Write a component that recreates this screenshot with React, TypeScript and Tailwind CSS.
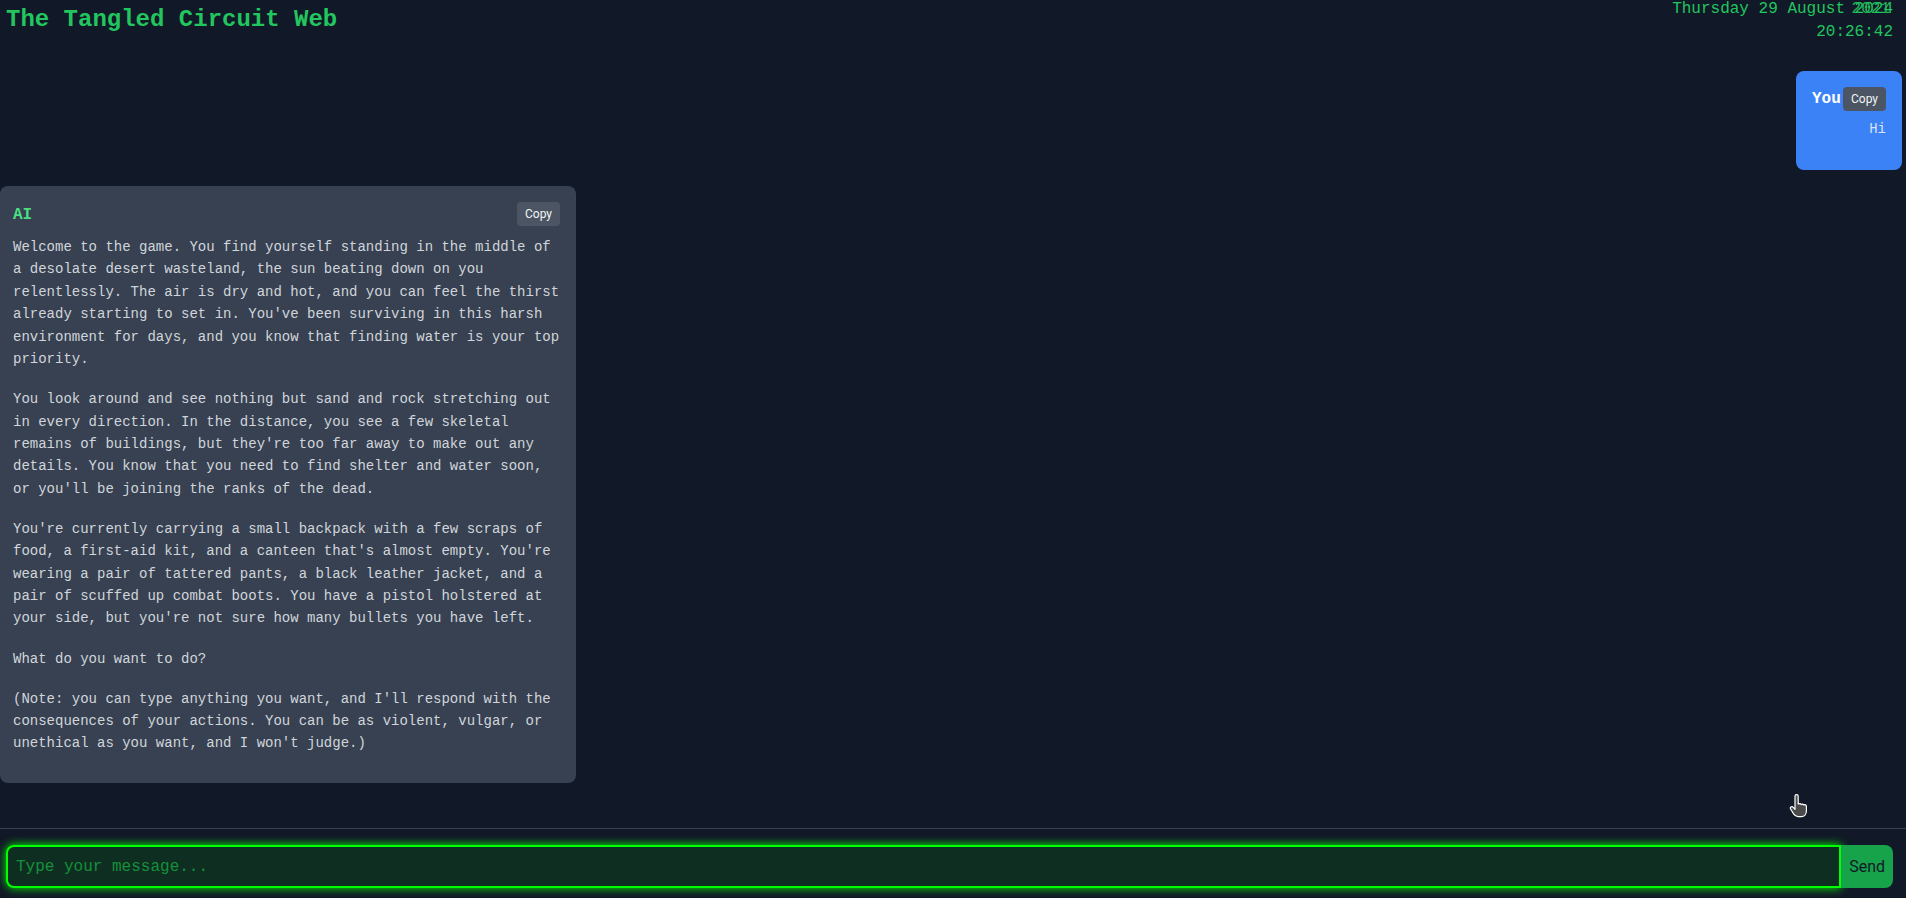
import React from 'react';

const aiParagraphs = [
  "Welcome to the game. You find yourself standing in the middle of a desolate desert wasteland, the sun beating down on you relentlessly. The air is dry and hot, and you can feel the thirst already starting to set in. You've been surviving in this harsh environment for days, and you know that finding water is your top priority.",
  "You look around and see nothing but sand and rock stretching out in every direction. In the distance, you see a few skeletal remains of buildings, but they're too far away to make out any details. You know that you need to find shelter and water soon, or you'll be joining the ranks of the dead.",
  "You're currently carrying a small backpack with a few scraps of food, a first-aid kit, and a canteen that's almost empty. You're wearing a pair of tattered pants, a black leather jacket, and a pair of scuffed up combat boots. You have a pistol holstered at your side, but you're not sure how many bullets you have left.",
  'What do you want to do?',
  "(Note: you can type anything you want, and I'll respond with the consequences of your actions. You can be as violent, vulgar, or unethical as you want, and I won't judge.)",
];

const CopyButton: React.FC = () => (
  <button className="absolute top-4 right-4 rounded bg-[#4b5563] px-2 py-1 text-xs leading-4 text-gray-100 font-['Roboto',sans-serif]">
    Copy
  </button>
);

const HandCursor: React.FC = () => (
  <svg width="22" height="26" viewBox="0 0 22 26" className="absolute left-[1788px] top-[794px] pointer-events-none">
    <path
      d="M7 2.2a1.6 1.6 0 0 1 3.2 0V10h.4a1.6 1.6 0 0 1 2.6.6 1.6 1.6 0 0 1 2.6.5 1.6 1.6 0 0 1 2.6 1.2V17c0 3.4-2.2 5.6-5 5.6H10c-2.1 0-3.3-1-4.4-2.7L2.6 15a1.5 1.5 0 0 1 2.4-1.8L7 15.4Z"
      fill="#4a4a4a"
      stroke="#ffffff"
      strokeWidth="1.2"
      strokeLinejoin="round"
    />
  </svg>
);

export default function App() {
  return (
    <div className="relative h-screen flex flex-col overflow-hidden bg-[#111827] font-['Liberation_Mono',monospace]">
      <header className="h-[44px] shrink-0 flex items-start justify-between">
        <h1 className="pl-[6px] pt-1 text-2xl leading-8 font-bold text-[#22c55e]">The Tangled Circuit Web</h1>
        <div className="-mt-[2px] pr-[13px] text-right text-base leading-[23px] text-[#22c55e]">
          <div className="relative">
            Thursday 29 August 2024
            <span className="absolute right-[3px] top-0 opacity-90">2021</span>
          </div>
          <div>20:26:42</div>
        </div>
      </header>

      <main className="flex-1 overflow-y-auto flex flex-col gap-4 pt-[27px]">
        <div className="relative self-end mr-[4px] w-[106px] flex flex-col rounded-lg bg-[#3b82f6] p-4">
          <div className="text-base leading-6 font-bold text-white">You</div>
          <CopyButton />
          <p className="mt-2 mb-[15px] text-right text-sm leading-5 text-[#dbe1f0]">Hi</p>
        </div>

        <div className="relative w-[576px] flex flex-col rounded-lg bg-[#374151] pt-[17px] pl-[13px] pr-4 pb-[10px]">
          <div className="mb-[9px] text-base leading-6 font-bold text-[#4ade80]">AI</div>
          <CopyButton />
          {aiParagraphs.map((p, i) => (
            <p key={i} className="mb-[17.7px] text-sm leading-[22.4px] text-[#d1d5db]">
              {p}
            </p>
          ))}
        </div>
      </main>

      <footer className="shrink-0 border-t border-[#374151] pt-4 pb-[10px] pl-[6px] pr-[13px]">
        <div className="flex">
          <input
            type="text"
            placeholder="Type your message..."
            className="h-[43px] flex-1 rounded-l-lg border-2 border-[#00ff00] bg-[#0f2e22] px-2 text-base text-[#22c55e] placeholder:text-[#15913a] shadow-[0_0_10px_#00ff00] outline-none"
          />
          <button className="h-[43px] rounded-r-lg bg-[#16a34a] px-2 text-base text-[#111827] font-['Roboto',sans-serif]">
            Send
          </button>
        </div>
      </footer>

      <HandCursor />
    </div>
  );
}
